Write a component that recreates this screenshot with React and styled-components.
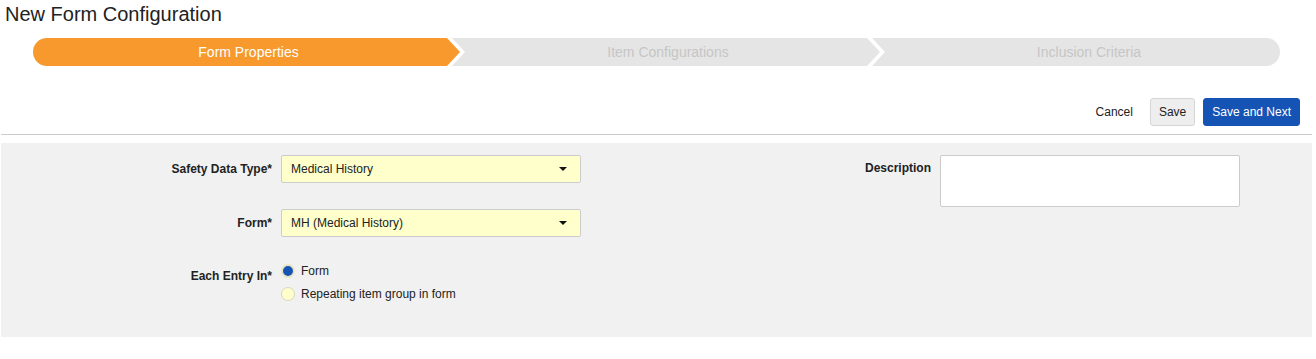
import styled, { createGlobalStyle } from 'styled-components'

const GlobalStyle = createGlobalStyle`
    body {
        margin: 0;
        background: #fff;
        font-family: 'Liberation Sans', Arial, sans-serif;
        color: #222;
    }
`

const Page = styled.div`
    padding: 0 4px 0 1px;
`

const Title = styled.h1`
    margin: 0;
    padding: 3px 0 0 4px;
    height: 35px;
    box-sizing: border-box;
    font-size: 20px;
    font-weight: normal;
    color: #222;
`

const Stepper = styled.div`
    display: flex;
    margin: 3px 32px 0 32px;
    height: 28px;
`

const Step = styled.div`
    flex: ${(p) => (p.$width ? `0 0 ${p.$width}px` : '1')};
    display: flex;
    align-items: center;
    justify-content: center;
    box-sizing: border-box;
    padding-left: ${(p) => (p.$pos === 'last' ? 26 : 4)}px;
    font-size: 14px;
    background: ${(p) => (p.$active ? '#f7992d' : '#e5e5e5')};
    color: ${(p) => (p.$active ? '#fff' : '#c6c6c6')};
    & + & {
        margin-left: -8px;
    }
    ${(p) =>
        p.$pos === 'first' &&
        `
        border-radius: 14px 0 0 14px;
        clip-path: polygon(0 0, calc(100% - 13px) 0, 100% 50%, calc(100% - 13px) 100%, 0 100%);
    `}
    ${(p) =>
        p.$pos === 'mid' &&
        `
        clip-path: polygon(0 0, calc(100% - 13px) 0, 100% 50%, calc(100% - 13px) 100%, 0 100%, 13px 50%);
    `}
    ${(p) =>
        p.$pos === 'last' &&
        `
        border-radius: 0 14px 14px 0;
        clip-path: polygon(0 0, 100% 0, 100% 100%, 0 100%, 13px 50%);
    `}
`

const Actions = styled.div`
    display: flex;
    justify-content: flex-end;
    align-items: center;
    gap: 8px;
    margin-top: 32px;
    padding: 0 12px 8px 0;
    border-bottom: 1px solid #ccc;
`

const Button = styled.button`
    height: 28px;
    padding: 0 8px;
    font-family: inherit;
    font-size: 12px;
    border-radius: 3px;
    cursor: pointer;
    border: 1px solid
        ${(p) => (p.$variant === 'primary' ? '#1553b5' : p.$variant === 'plain' ? 'transparent' : '#d6d6d6')};
    background: ${(p) => (p.$variant === 'primary' ? '#1553b5' : p.$variant === 'plain' ? 'transparent' : '#eee')};
    color: ${(p) => (p.$variant === 'primary' ? '#fff' : '#222')};
`

const Panel = styled.div`
    display: flex;
    align-items: flex-start;
    margin-top: 8px;
    height: 194px;
    padding-top: 12px;
    box-sizing: border-box;
    background: #f1f1f1;
`

const FieldGrid = styled.div`
    display: grid;
    grid-template-columns: ${(p) => p.$labelWidth}px 300px;
    column-gap: 9px;
    row-gap: 26px;
    margin-left: ${(p) => p.$offset || 0}px;
`

const Label = styled.div`
    text-align: right;
    font-size: 12px;
    font-weight: bold;
    color: #222;
    padding-top: ${(p) => p.$top || 7}px;
`

const Select = styled.div`
    display: flex;
    align-items: center;
    justify-content: space-between;
    height: 28px;
    box-sizing: border-box;
    padding: 0 13px 0 9px;
    border: 1px solid #ccc;
    border-radius: 2px;
    background: #ffffcc;
    font-size: 12px;
    color: #222;
`

const Caret = styled.span`
    width: 0;
    height: 0;
    border-left: 4px solid transparent;
    border-right: 4px solid transparent;
    border-top: 4px solid #111;
`

const RadioGroup = styled.div`
    display: flex;
    flex-direction: column;
    gap: 9px;
    padding-top: 1px;
`

const RadioRow = styled.label`
    display: flex;
    align-items: center;
    gap: 6px;
    font-size: 12px;
    color: #222;
`

const RadioDot = styled.span`
    width: 14px;
    height: 14px;
    box-sizing: border-box;
    border-radius: 50%;
    border: ${(p) => (p.$checked ? '2px solid #e8e6c4' : '1px solid #d8d8c0')};
    background: ${(p) => (p.$checked ? '#1553b5' : '#ffffcc')};
`

const TextArea = styled.div`
    height: 52px;
    box-sizing: border-box;
    border: 1px solid #ccc;
    border-radius: 2px;
    background: #fff;
`

function SelectField({ value }) {
    return (
        <Select>
            <span>{value}</span>
            <Caret />
        </Select>
    )
}

function App() {
    return (
        <Page>
            <GlobalStyle />
            <Title>New Form Configuration</Title>
            <Stepper>
                <Step $active $pos='first' $width={427}>
                    Form Properties
                </Step>
                <Step $pos='mid' $width={428}>
                    Item Configurations
                </Step>
                <Step $pos='last'>Inclusion Criteria</Step>
            </Stepper>
            <Actions>
                <Button $variant='plain'>Cancel</Button>
                <Button>Save</Button>
                <Button $variant='primary'>Save and Next</Button>
            </Actions>
            <Panel>
                <FieldGrid $labelWidth={271}>
                    <Label>Safety Data Type*</Label>
                    <SelectField value='Medical History' />
                    <Label>Form*</Label>
                    <SelectField value='MH (Medical History)' />
                    <Label $top={6}>Each Entry In*</Label>
                    <RadioGroup>
                        <RadioRow>
                            <RadioDot $checked />
                            Form
                        </RadioRow>
                        <RadioRow>
                            <RadioDot />
                            Repeating item group in form
                        </RadioRow>
                    </RadioGroup>
                </FieldGrid>
                <FieldGrid $labelWidth={91} $offset={259}>
                    <Label $top={6}>Description</Label>
                    <TextArea />
                </FieldGrid>
            </Panel>
        </Page>
    )
}

export default App
